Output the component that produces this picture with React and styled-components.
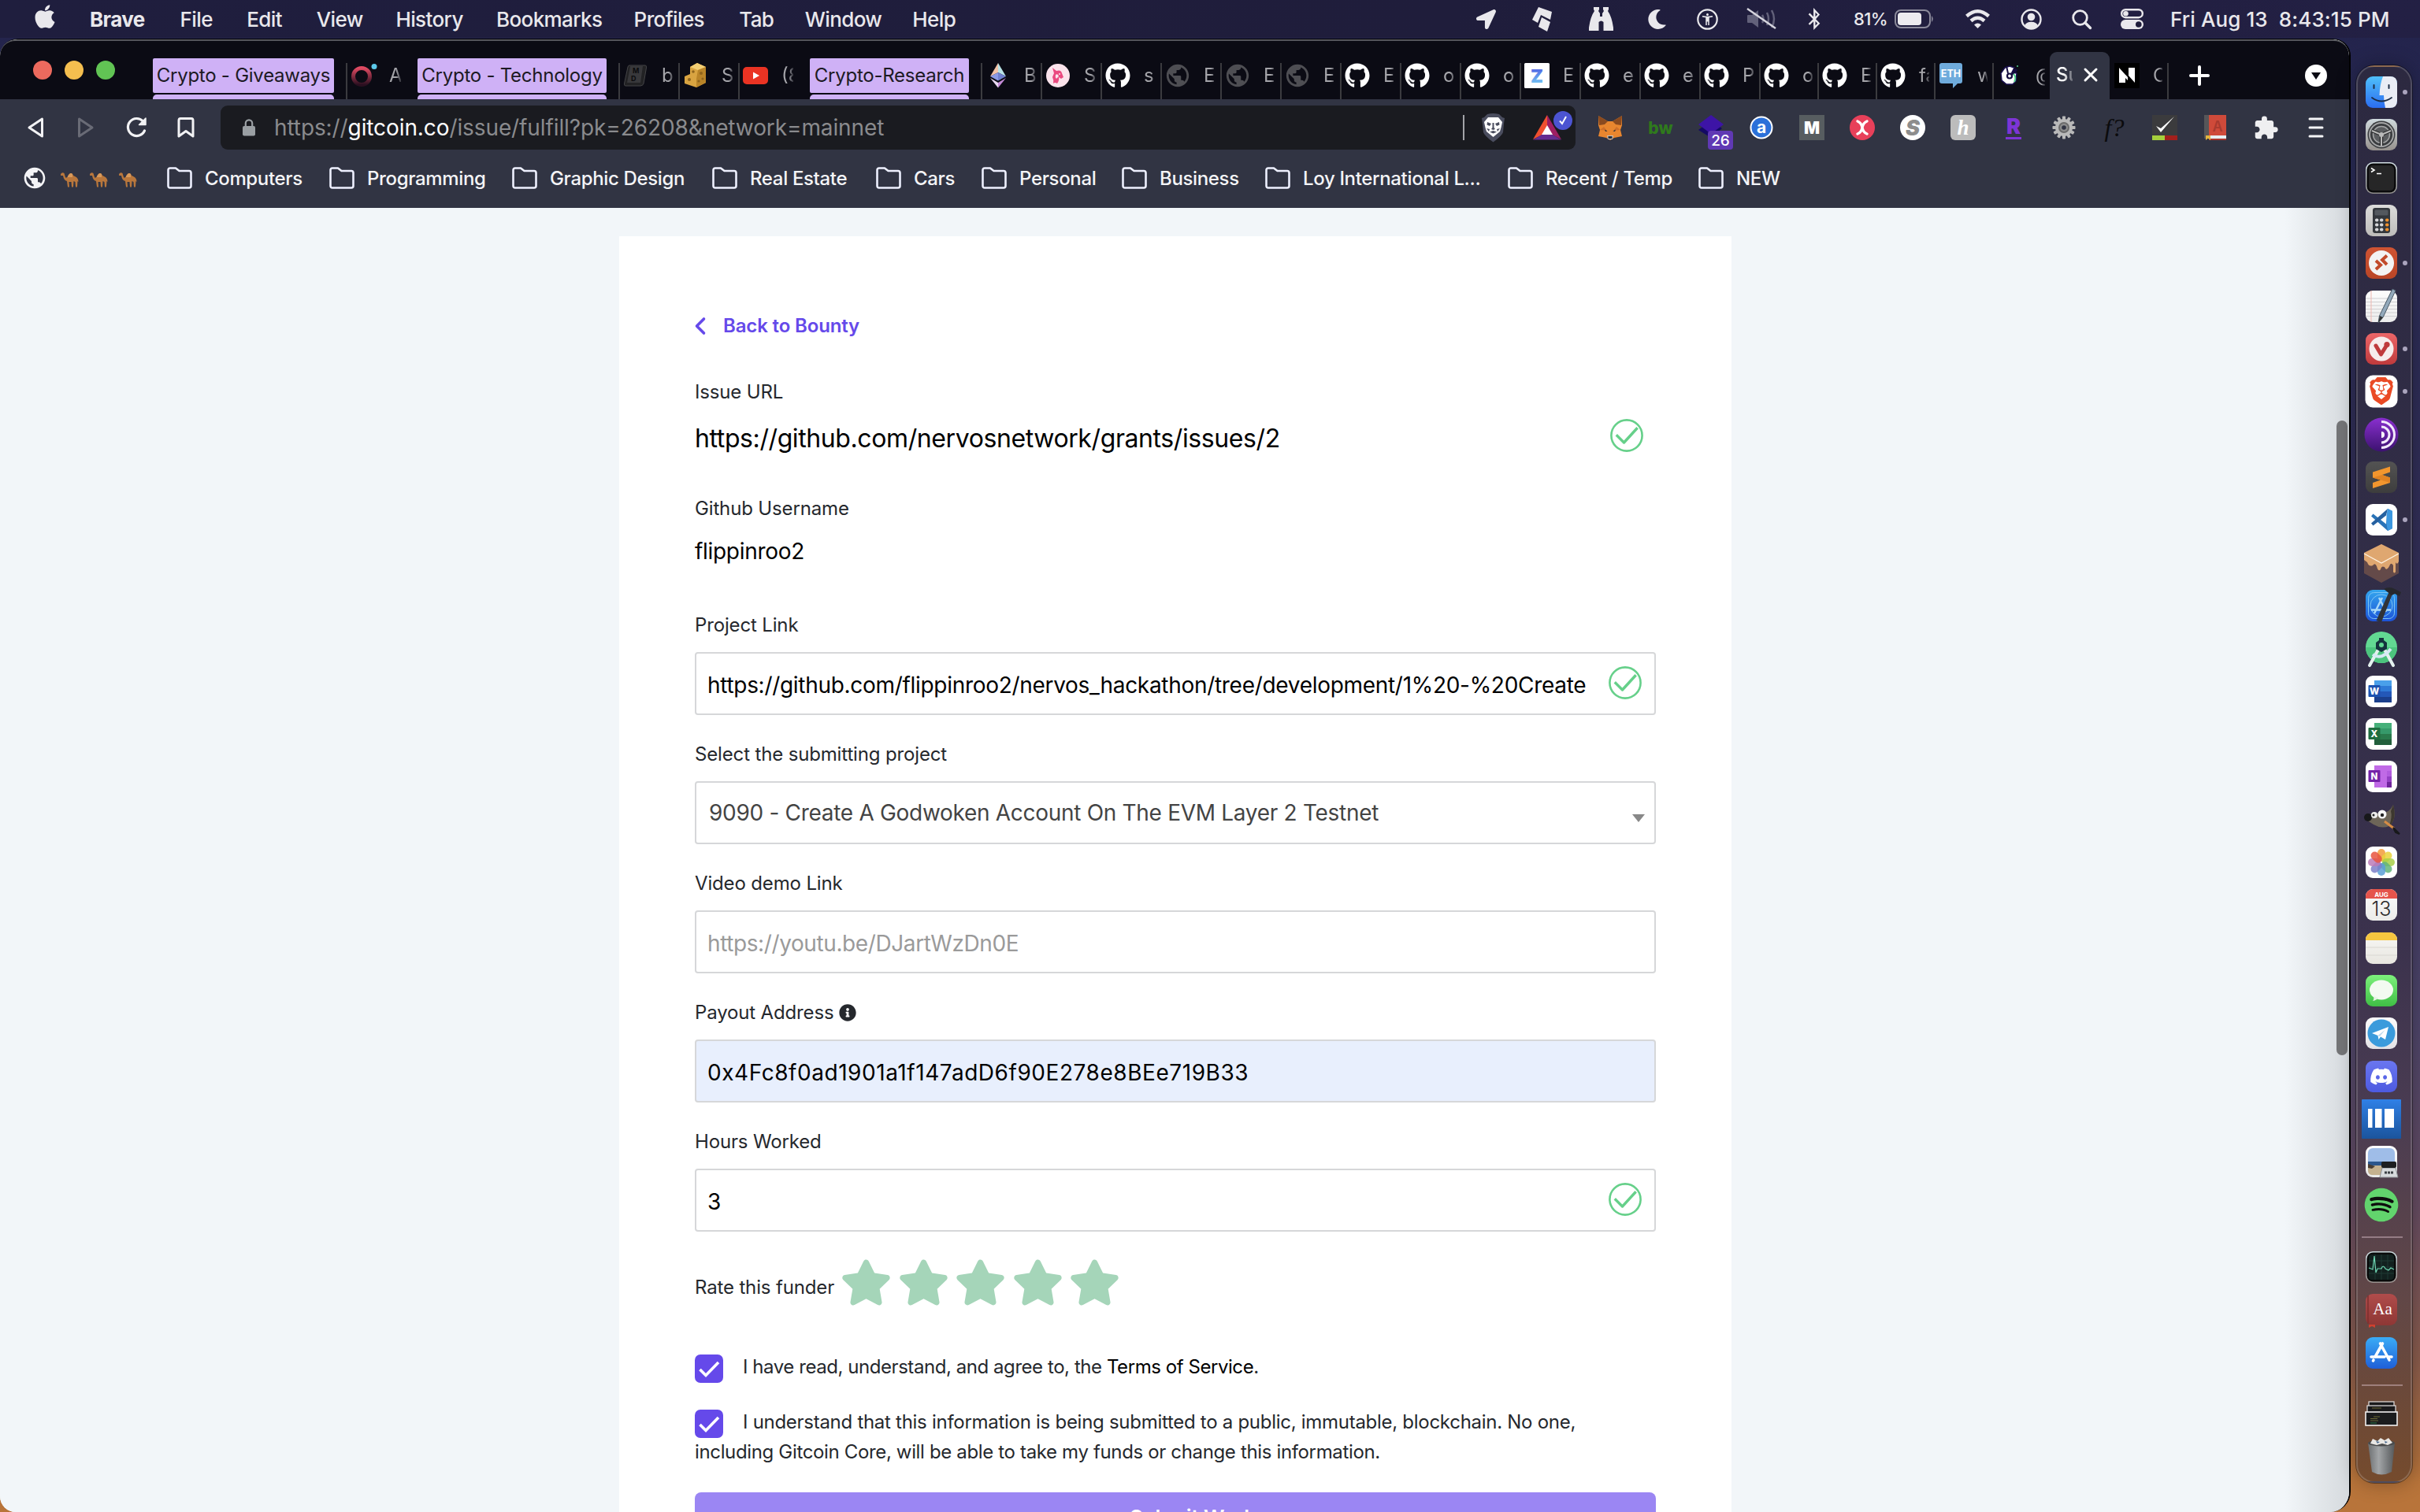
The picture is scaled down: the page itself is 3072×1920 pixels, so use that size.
import React from 'react';
import styled, { createGlobalStyle, css } from 'styled-components';
import {
  FaApple, FaGithub, FaLocationArrow, FaMoon, FaBluetoothB, FaStar,
  FaInfoCircle, FaDiscord, FaSpotify,
} from 'react-icons/fa';
import { MdPublic, MdExtension, MdAccessibilityNew } from 'react-icons/md';
import { SiBrave } from 'react-icons/si';

const GlobalStyle = createGlobalStyle`
  * { box-sizing: border-box; }
  html, body, #root { margin: 0; width: 3072px; height: 1920px; overflow: hidden; }
  body { font-family: Inter, "Liberation Sans", sans-serif; }
  svg { display: block; flex: none; overflow: visible; }
`;

const Desktop = styled.div`
  width: 3072px;
  height: 1920px;
  display: flex;
  flex-direction: column;
  overflow: hidden;
  background: linear-gradient(180deg, #22224a 0%, #292b55 12%, #332f57 38%, #3f3a63 55%, #4e4569 68%, #664c61 80%, #8a5c4c 90%, #b8743a 98%);
`;

/* ---------- system menu bar ---------- */

const MenuBar = styled.header`
  height: 48px;
  flex: none;
  display: flex;
  align-items: center;
  padding: 0 37px 0 43px;
  background: linear-gradient(90deg, #1f1e3e, #1f1d3b 60%, #232044);
  color: #e9e8ec;
  font-size: 26px;
  font-weight: 500;
`;
const MenuList = styled.nav`
  display: flex;
  align-items: center;
  flex: 1;
`;
const MenuItem = styled.span`
  width: ${(p) => p.$w}px;
  margin-right: 42.6px;
  letter-spacing: -0.6px;
  white-space: nowrap;
  font-weight: ${(p) => (p.$bold ? 700 : 500)};
`;
const AppleMark = styled(FaApple)`
  width: 28px;
  height: 34px;
  margin: -6px 43px 0 0;
`;
const StatusItem = styled.span`
  display: flex;
  align-items: center;
  justify-content: center;
  width: ${(p) => p.$w}px;
  margin-right: ${(p) => p.$gap}px;
`;
const BatteryText = styled.span`
  font-size: 22px;
  letter-spacing: -0.6px;
  width: 43px;
  margin-right: 9px;
`;
const Clock = styled.span`
  width: 280px;
  white-space: pre;
  letter-spacing: 0.1px;
`;

/* ---------- workspace ---------- */

const Workspace = styled.div`
  flex: 1;
  display: flex;
  min-height: 0;
`;
const Window = styled.main`
  width: 2984px;
  flex: none;
  margin-top: 1px;
  display: flex;
  flex-direction: column;
  border: 2px solid #000;
  border-width: 1px 2px 0 0;
  border-radius: 22px 22px 26px 20px;
  overflow: hidden;
  background: #f2f6f9;
`;
const TabStrip = styled.div`
  height: 76px;
  flex: none;
  display: flex;
  align-items: flex-end;
  background: #0b0b14;
  border-top: 2px solid #55565c;
  border-radius: 20px 20px 0 0;
`;
const TrafficLights = styled.div`
  display: flex;
  gap: 16px;
  width: 194px;
  padding-left: 42px;
  align-self: center;
`;
const Light = styled.i`
  width: 24px;
  height: 24px;
  border-radius: 50%;
  background: ${(p) => p.$c};
`;
const GroupLabel = styled.div`
  width: ${(p) => p.$w}px;
  height: 52px;
  margin: 0 15px 0 ${(p) => p.$ml || 0}px;
  display: flex;
  flex-direction: column;
  gap: 2px;
`;
const GroupText = styled.span`
  flex: 1;
  display: flex;
  align-items: center;
  justify-content: center;
  padding-bottom: 2px;
  border-radius: 2px;
  background: #cfb1f6;
  color: #1d1a24;
  font-size: 24px;
  letter-spacing: -0.25px;
  white-space: nowrap;
`;
const GroupLine = styled.i`
  height: 6px;
  border-radius: 5px 5px 0 0;
  background: #cfb1f6;
`;
const Tab = styled.div`
  width: ${(p) => p.$w || 76}px;
  height: 46px;
  flex: none;
  display: flex;
  align-items: center;
  padding: 0 6px 14px 4px;
  border-left: 2px solid ${(p) => (p.$bare ? 'transparent' : '#3b3b3f')};
`;
const Favicon = styled.span`
  width: 32px;
  height: 32px;
  flex: none;
  display: flex;
  align-items: center;
  justify-content: center;
  color: ${(p) => p.$c || '#fff'};
`;
const TabTitle = styled.span`
  flex: 1;
  margin-left: ${(p) => (p.$active ? 0 : 17)}px;
  overflow: hidden;
  white-space: nowrap;
  font-size: 24px;
  line-height: 32px;
  height: 32px;
  color: ${(p) => (p.$active ? '#fff' : '#a5a5aa')};
  font-weight: ${(p) => (p.$active ? 500 : 400)};
  mask-image: linear-gradient(90deg, #000 ${(p) => (p.$active ? 45 : 60)}%, rgba(0, 0, 0, 0.25));
`;
const ActiveTab = styled.div`
  width: 76px;
  height: 60px;
  flex: none;
  display: flex;
  align-items: center;
  padding: 0 15px 2px 8px;
  gap: 14px;
  border-radius: 9px 9px 0 0;
  background: #313443;
`;
const TabEnd = styled.i`
  width: 2px;
  height: 46px;
  margin-right: 27px;
  background: #3b3b3f;
`;
const StripButton = styled.span`
  height: 46px;
  margin-right: ${(p) => p.$gap || 0}px;
  padding-top: ${(p) => p.$top}px;
`;

/* ---------- toolbar ---------- */

const Toolbar = styled.div`
  height: 72px;
  flex: none;
  display: flex;
  align-items: center;
  padding-left: 35px;
  background: #313443;
`;
const NavIcon = styled.span`
  width: ${(p) => p.$w}px;
  margin-right: ${(p) => p.$gap}px;
`;
const AddressBar = styled.div`
  width: 1720px;
  height: 56px;
  display: flex;
  align-items: center;
  padding: 0 4px 0 28px;
  border-radius: 9px;
  background: #1a1b20;
`;
const Url = styled.span`
  flex: 1;
  margin-left: 24px;
  font-size: 28px;
  letter-spacing: -0.1px;
  color: #8a8b8e;
  white-space: nowrap;
`;
const Host = styled.b`
  font-weight: 400;
  color: #fff;
`;
const UrlDivider = styled.i`
  width: 2px;
  height: 32px;
  margin-right: 21px;
  background: #a3a4a8;
`;
const RewardsButton = styled.span`
  position: relative;
  width: 36px;
  margin: 0 14px 0 35px;
`;
const RewardsBadge = styled.span`
  position: absolute;
  right: -14px;
  top: -5px;
`;
const ExtensionRow = styled.div`
  display: flex;
  align-items: center;
  gap: 32px;
  margin-left: 28px;
`;
const Extension = styled.span`
  position: relative;
  width: 32px;
  height: 32px;
  display: flex;
  align-items: center;
  justify-content: center;
  border-radius: ${(p) => p.$r || 0};
  background: ${(p) => p.$bg || 'none'};
  color: ${(p) => p.$c || '#fff'};
  font: ${(p) => p.$font || '700 24px Inter, sans-serif'};
  line-height: 1;
`;
const CountBadge = styled.span`
  position: absolute;
  left: 12px;
  top: 20px;
  width: 32px;
  height: 24px;
  border-radius: 4px;
  background: #6039b4;
  color: #fff;
  font: 500 19px/26px Inter, sans-serif;
  text-align: center;
`;
const RLetter = styled.span`
  border-bottom: 3px solid #7d35d6;
  line-height: 26px;
  padding: 0 1px;
`;

/* ---------- bookmarks ---------- */

const BookmarkBar = styled.div`
  height: 66px;
  flex: none;
  display: flex;
  align-items: center;
  padding: 0 0 10px 28px;
  background: #313443;
  color: #f4f4f7;
  font-size: 24px;
  font-weight: 500;
`;
const Camels = styled.span`
  display: flex;
  gap: 12px;
  margin: 3px 37px 0 16px;
`;
const Bookmark = styled.span`
  width: ${(p) => p.$w}px;
  display: flex;
  align-items: center;
  gap: 16px;
  letter-spacing: -0.35px;
  white-space: nowrap;
`;

/* ---------- page ---------- */

const Viewport = styled.div`
  flex: 1;
  min-height: 0;
  display: flex;
  justify-content: space-between;
  padding: 36px 2px 0 786px;
  background: linear-gradient(90deg, transparent 2900px, rgba(60, 66, 74, 0.16) 2984px), #f2f6f9;
`;
const ScrollThumb = styled.i`
  width: 14px;
  height: 806px;
  margin-top: 234px;
  border-radius: 7px;
  background: #747577;
`;
const Card = styled.section`
  width: 1412px;
  padding: 96px 96px 0;
  background: #fff;
  color: #25282d;
  font-size: 24px;
  line-height: 36px;
  letter-spacing: -0.15px;
`;
const BackLink = styled.a`
  display: flex;
  align-items: center;
  gap: 22px;
  margin-bottom: 47px;
  color: #6549ea;
  font-weight: 600;
`;
const StaticRow = styled.div`
  display: flex;
  align-items: center;
  justify-content: space-between;
  height: 44px;
  padding-right: 16px;
  margin: 20px 0 48px;
  color: #000;
  font-size: 32px;
  letter-spacing: -0.4px;
  & > svg { margin-top: -8px; }
`;
const StaticText = styled.div`
  height: 40px;
  margin: 17px 0 55px;
  color: #000;
  font-size: 28px;
  line-height: 40px;
  letter-spacing: -0.3px;
`;
const Label = styled.label`
  display: flex;
  align-items: center;
  gap: 7px;
  height: 36px;
  padding-top: 2px;
`;
const Input = styled.div`
  height: 80px;
  margin: 17px 0 31px;
  padding: ${(p) => (p.$select ? '0 12px 0 16px' : '3px 16px 0 14px')};
  display: flex;
  align-items: center;
  justify-content: space-between;
  border: 2px solid #d6d7d9;
  border-radius: 4px;
  background: ${(p) => (p.$filled ? '#e8effd' : '#fff')};
  color: ${(p) => (p.$placeholder ? '#9a9a9a' : p.$select ? '#444' : '#000')};
  font-size: 28px;
  letter-spacing: ${(p) => p.$ls || '-0.3px'};
  & > svg { margin-top: -5px; }
`;
const InputText = styled.span`
  max-width: 1115px;
  overflow: hidden;
  white-space: nowrap;
`;
const Caret = styled.i`
  margin-top: 13px;
  border: 8px solid transparent;
  border-top: 10px solid #888;
  border-bottom: 0;
`;
const RateRow = styled.div`
  height: 58px;
  margin: 35px 0 60px;
  display: flex;
  align-items: center;
`;
const RateText = styled.span`
  width: 185px;
  padding-top: 13px;
`;
const Stars = styled.span`
  display: flex;
  gap: 7.6px;
  color: #a5d5b9;
`;
const Agreement = styled.p`
  margin: 0 0 32px;
  line-height: 38px;
  white-space: nowrap;
  letter-spacing: ${(p) => p.$ls};
`;
const Checkbox = styled.span`
  display: inline-block;
  overflow: hidden;
  width: 36px;
  height: 36px;
  margin: 0 25px -4px 0;
  vertical-align: -8px;
  border-radius: 7px;
  background: #6549ea;
`;
const Terms = styled.a`
  color: #000;
`;
const LastLine = styled.span`
  letter-spacing: -0.35px;
`;
const Submit = styled.div`
  height: 80px;
  margin-top: 31px;
  padding: 14px 0 0 552px;
  border-radius: 8px;
  background: #9b86f3;
  color: #fff;
  font-size: 26px;
  font-weight: 600;
`;

/* ---------- dock ---------- */

const DockColumn = styled.aside`
  padding: 35px 0 36px 7px;
`;
const Dock = styled.div`
  width: 71px;
  height: 1800px;
  display: flex;
  flex-direction: column;
  align-items: center;
  padding-top: 5px;
  border: 2px solid rgba(255, 255, 255, 0.17);
  outline: 1px solid rgba(0, 0, 0, 0.4);
  border-radius: 23px;
  background: linear-gradient(180deg, #2c2940 0%, #322e48 40%, #3b324d 62%, #4a3c52 74%, #614747 87%, #754b2d 100%);
  box-shadow: 0 0 26px rgba(0, 0, 0, 0.3);
`;
const DockItem = styled.span`
  position: relative;
  height: 54.33px;
  width: 67px;
  display: flex;
  align-items: center;
  padding-left: 5px;
  ${(p) => p.$running && css`
    &::after {
      content: '';
      position: absolute;
      right: 4px;
      top: 24px;
      width: 6px;
      height: 6px;
      border-radius: 50%;
      background: #aaa4bd;
    }
  `}
`;
const DockRule = styled.i`
  width: 52px;
  height: 2px;
  margin: 13px 5px 10px 0;
  background: rgba(230, 205, 215, 0.42);
`;

/* ---------- drawings ---------- */

const Stroke = ({ w, h = w, vb, sw = 3, c = 'currentColor', children }) => (
  <svg width={w} height={h} viewBox={vb || `0 0 ${w} ${h}`} fill="none" stroke={c} strokeWidth={sw} strokeLinecap="round" strokeLinejoin="round">
    {children}
  </svg>
);

const FolderIcon = () => (
  <Stroke w={32} h={28} sw={2.6} c="#eef0ff">
    <path d="M1.500 4Q1.500 1.500 4 1.500H11L15.500 5H28Q30.500 5 30.500 7.500V24Q30.500 26.500 28 26.500H4Q1.500 26.500 1.500 24Z" />
  </Stroke>
);

const Camel = () => (
  <svg width="25" height="20" viewBox="0 0 25 20">
    <path d="M1 3Q3 0 5.500 2L7 7Q8 9 10 6Q13 0 16 3Q17 6 20 6.500Q23.500 8 23.500 13L22.500 12L22 19.500H20L19.500 13L17.500 12L17 19.500H15L14.500 13H11.500L12 19.500H10L9 12Q5 11 4 5L1.200 5Z" fill="#b9773c" />
    <path d="M10 6Q13 0 16 3L16 7H10Z" fill="#d99a5a" />
  </svg>
);

const CheckCircle = () => (
  <Stroke w={42} sw={2.6} c="#66d08a">
    <circle cx="21" cy="21" r="19.600" />
    <path d="M9 21.500L17.500 30L33.500 12.500" strokeLinecap="square" strokeWidth="3.400" />
  </Stroke>
);

const GroupRing = () => (
  <svg width="32" height="32" viewBox="0 0 32 32">
    <defs>
      <linearGradient id="ring" x1="0" y1="0" x2="0" y2="1">
        <stop offset="0" stopColor="#e04a62" />
        <stop offset="1" stopColor="#2a0f20" />
      </linearGradient>
    </defs>
    <circle cx="14" cy="17" r="10.500" fill="none" stroke="url(#ring)" strokeWidth="5" />
    <circle cx="30" cy="4.500" r="3.500" fill="#5cc9ea" />
  </svg>
);

const Cheese = () => (
  <svg width="32" height="32" viewBox="0 0 32 32">
    <path d="M9 5L18 0L29 5V25L17 31L2 26V17L9 14Z" fill="#d9a441" />
    <path d="M9 5L18 0L29 5L19 9Z" fill="#f3cf74" />
    <path d="M19 9L29 5V25L17 31V20Z" fill="#b98428" />
    <g fill="#8f641c">
      <circle cx="13" cy="11" r="1.800" />
      <circle cx="23" cy="13" r="2" />
      <circle cx="25" cy="20" r="1.600" />
      <circle cx="8" cy="21" r="2" />
      <circle cx="20" cy="23" r="1.600" />
    </g>
  </svg>
);

const MdKey = () => (
  <svg width="32" height="32" viewBox="0 0 32 32">
    <path d="M8 3H28Q30 3 29.500 6L26 26Q25 29 22 29H3Q1 29 1.500 26L6 5Q6.500 3 8 3Z" fill="#222224" stroke="#444447" strokeWidth="1" />
    <path d="M9 4H25L22 25H5Z" fill="#38383b" />
    <text x="12" y="13" fill="#0c0c0e" fontFamily="Inter" fontWeight="700" fontSize="9">M</text>
    <text x="10" y="23" fill="#0c0c0e" fontFamily="Inter" fontWeight="700" fontSize="9">D</text>
  </svg>
);

const YouTube = () => (
  <svg width="32" height="32" viewBox="0 0 32 32">
    <rect y="5" width="32" height="22" rx="5" fill="#ea3323" />
    <path d="M13 11.500L21 16L13 20.500Z" fill="#fff" />
  </svg>
);

const EthColor = () => (
  <svg width="32" height="32" viewBox="0 0 32 32">
    <path d="M16 0L6 17L16 12Z" fill="#f3c3a8" />
    <path d="M16 0L26 17L16 12Z" fill="#b9e3e6" />
    <path d="M6 17L16 12V22.500Z" fill="#8a9ae6" />
    <path d="M26 17L16 12V22.500Z" fill="#6f7fd0" />
    <path d="M6 19L16 25V31.500Z" fill="#e9d9f2" />
    <path d="M26 19L16 25V31.500Z" fill="#c48bd8" />
  </svg>
);

const Unicorn = () => (
  <svg width="32" height="32" viewBox="0 0 32 32">
    <circle cx="16" cy="16" r="15" fill="#fbe3ec" />
    <path d="M9 6L14 10Q20 8 21 13L23 18L20 20L17 18Q18 22 15 26Q12 24 10 26Q11 22 9 18Q10 15 11 13Z" fill="#ea4a80" />
    <path d="M13 15Q16 13 17 17L14 20Q12 18 13 15Z" fill="#fbe3ec" />
    <circle cx="18" cy="14" r="1" fill="#fbe3ec" />
  </svg>
);

const ZTile = () => (
  <svg width="32" height="32" viewBox="0 0 32 32">
    <defs>
      <linearGradient id="zt" x1="0" y1="0" x2="0" y2="1">
        <stop offset="0" stopColor="#4a4fe0" />
        <stop offset="1" stopColor="#7ad8f6" />
      </linearGradient>
    </defs>
    <rect width="32" height="32" rx="1.500" fill="#fff" />
    <text x="8" y="24.500" fill="url(#zt)" fontFamily="Inter" fontWeight="900" fontSize="23">Z</text>
  </svg>
);

const EthBubble = () => (
  <svg width="30" height="32" viewBox="0 0 30 32">
    <path d="M3 0H26Q29 0 29 3V23Q29 26 26 26H23L17 32V26H3Q0 26 0 23V3Q0 0 3 0Z" fill="#6fabdc" />
    <text x="14.500" y="18" textAnchor="middle" fill="#fff" fontFamily="Inter" fontWeight="700" fontSize="12.500">ETH</text>
  </svg>
);

const Orbit = () => (
  <svg width="32" height="32" viewBox="0 0 32 32">
    <path d="M16 4L22 6L19 12L25 13L24 23L20 27L12 27L6 22L5 13L10 6Z" fill="#fff" stroke="#1a1050" strokeWidth="1.500" />
    <circle cx="16" cy="16.500" r="3" fill="#fff" stroke="#140c40" strokeWidth="2.200" />
    <path d="M14 13L12 4" stroke="#140c40" strokeWidth="2" />
    <path d="M18 15L25 8" stroke="#140c40" strokeWidth="3.500" />
    <path d="M21 14Q25 18 22 24" stroke="#4fd18a" strokeWidth="2" fill="none" />
    <circle cx="26" cy="4" r="1" fill="#4fd18a" />
  </svg>
);

const NTile = () => (
  <svg width="32" height="32" viewBox="0 0 32 32">
    <rect width="32" height="32" fill="#000" />
    <path d="M6 6L14 15V25H6ZM26 25L18 16V6H26Z" fill="#fff" />
    <path d="M6 6L17 18V22L14 19V15Z" fill="#fff" />
  </svg>
);

const Battery = () => (
  <svg width="51" height="24" viewBox="0 0 51 24">
    <rect x="1" y="1" width="44" height="22" rx="7" fill="none" stroke="#8b8a9b" strokeWidth="2" />
    <rect x="4" y="4" width="30" height="16" rx="4" fill="#ecebef" />
    <path d="M47 8Q50.500 12 47 16Z" fill="#8b8a9b" />
  </svg>
);

const Wifi = () => (
  <Stroke w={33} h={24} sw={4.4}>
    <path d="M2.500 8.500Q16.500 -4 30.500 8.500" strokeLinecap="butt" />
    <path d="M8 14.500Q16.500 7 25 14.500" strokeLinecap="butt" />
    <path d="M12 19.500Q16.500 15.500 21 19.500L16.500 24Z" fill="currentColor" stroke="none" />
  </Stroke>
);

const UserCircle = () => (
  <svg width="27" height="27" viewBox="0 0 27 27">
    <circle cx="13.500" cy="13.500" r="12" fill="none" stroke="currentColor" strokeWidth="2.400" />
    <circle cx="13.500" cy="10.500" r="4.800" fill="currentColor" />
    <path d="M5 21.500Q7 16.800 13.500 16.800T22 21.500Q19 25.500 13.500 25.500T5 21.500Z" fill="currentColor" />
  </svg>
);

const ControlCenter = () => (
  <svg width="29" height="26" viewBox="0 0 29 26">
    <rect x="1.200" y="1.200" width="26.600" height="10" rx="5" fill="none" stroke="currentColor" strokeWidth="2.400" />
    <circle cx="6.500" cy="6.200" r="3.300" fill="currentColor" />
    <rect y="14" width="29" height="12" rx="6" fill="currentColor" />
    <circle cx="22.800" cy="20" r="3.800" fill="#1f1d3b" />
  </svg>
);

const Muted = () => (
  <svg width="38" height="28" viewBox="0 0 38 28">
    <path d="M1 10Q1 9 2 9H7L15 3V25L7 19H2Q1 19 1 18Z" fill="#62617a" />
    <path d="M20 9Q23 14 20 19M26 6Q30 14 26 22M32 3Q38 14 32 25" fill="none" stroke="#62617a" strokeWidth="2.500" />
    <path d="M1 1L37 26" stroke="#d6d5de" strokeWidth="2.500" />
  </svg>
);

const Binoculars = () => (
  <svg width="31" height="30" viewBox="0 0 31 30">
    <path d="M6 0H13V3L12 5L14 8V12H17V8L19 5L18 3V0H25V3L24 5Q29 12 31 26V30H18.500V19Q15.500 16 12.500 19V30H0V26Q2 12 7 5L6 3Z" fill="currentColor" />
  </svg>
);

const Kite = () => (
  <svg width="26" height="31" viewBox="0 0 26 31">
    <path d="M8 0L25 6L23 16L11 10L7 20L0 16Z" fill="currentColor" />
    <path d="M12 13L23 19L19 31L8 25Z" fill="currentColor" />
  </svg>
);

const Accessibility = () => (
  <svg width="27" height="27" viewBox="0 0 27 27">
    <circle cx="13.500" cy="13.500" r="12.200" fill="none" stroke="currentColor" strokeWidth="2.200" />
    <g transform="translate(4.500 4.500)"><MdAccessibilityNew size={18} /></g>
  </svg>
);

const Lion = () => (
  <svg width="31" height="37" viewBox="0 0 31 37">
    <path d="M8 1Q15 -1 23 1L27 5L30 6L29 13L28 24Q27 28 15.500 36.500Q4 28 3 24L2 13L1 6L4 5Z" fill="#4a4d5e" />
    <path d="M9 5H22L27 11L25.500 18L24 23L15.500 30L7 23L5.500 18L4 11Z" fill="#fff" />
    <path d="M8 11L13 13L11 16L7.500 14.500ZM23 11L18 13L20 16L23.500 14.500ZM13 20L15.500 21L18 20L16.500 18V12H14.500V18ZM7 19L11 20L10 23ZM24 19L20 20L21 23ZM11 23.500L15.500 22L20 23.500L15.500 25.500Z" fill="#4a4d5e" />
  </svg>
);

const Bat = () => (
  <svg width="36" height="32" viewBox="0 0 36 32">
    <path d="M18 0L0 31L12 25L18 14Z" fill="#f0502f" />
    <path d="M18 0L36 31L24 25L18 14Z" fill="#9e1f63" />
    <path d="M0 31.500H36L24 24.500H12Z" fill="#662d91" />
    <path d="M18 13L25 25H11Z" fill="#fff" />
  </svg>
);

const Fox = () => (
  <svg width="32" height="31" viewBox="0 0 32 31">
    <path d="M1 0L13 7H19L31 0L31 12L29 18L31 26L21 28L16 31L11 28L1 26L3 18L1 12Z" fill="#e8862f" />
    <path d="M1 0L13 7L9 11L2 12ZM31 0L19 7L23 11L30 12Z" fill="#8a4a1f" />
    <path d="M8 14L12 19L3 18ZM24 14L20 19L29 18Z" fill="#d0702a" />
    <path d="M12 25H20L19 30H13Z" fill="#c9c0bb" />
    <path d="M13.500 26H18.500V29H13.500Z" fill="#26303c" />
    <path d="M9 17.500L12.500 19.500L10 20ZM23 17.500L19.500 19.500L22 20Z" fill="#26303c" />
  </svg>
);

const Diamond = () => (
  <svg width="32" height="32" viewBox="0 0 32 32">
    <path d="M0 19L16 7L30 17L16 29Z" fill="#140a63" />
    <path d="M0 12L16 0L32 12L16 24Z" fill="#3d14a6" />
  </svg>
);

const Gear = () => (
  <svg width="30" height="30" viewBox="-15 -15 30 30">
    <g fill="#b9b9b9">
      {Array.from({ length: 12 }, (_, i) => (
        <rect key={i} x="-2" y="-14.500" width="4" height="6" rx="0.800" transform={`rotate(${i * 30})`} />
      ))}
      <circle r="11" />
    </g>
    <circle r="6" fill="#8d8d8d" stroke="#6b6b6b" strokeWidth="2" />
    <circle r="2.800" fill="#313443" />
  </svg>
);

const Ticker = () => (
  <svg width="32" height="32" viewBox="0 0 32 32">
    <rect width="32" height="32" fill="#3b3b3d" />
    <rect y="26" width="16" height="6" fill="#a5cf3c" />
    <rect x="16" y="26" width="16" height="6" fill="#a3201c" />
    <path d="M5 14L11 22L28 2L11 17Z" fill="#fff" />
  </svg>
);

const RedBook = () => (
  <svg width="28" height="32" viewBox="0 0 28 32">
    <path d="M0 0H6V30H0Z" fill="#565659" />
    <path d="M6 0H28V26H6Z" fill="#cf4a3a" />
    <path d="M5 26H28V30H5Z" fill="#e7eef2" />
    <path d="M6 30H28V32H6Z" fill="#a8352b" />
    <path d="M2 26H8V32L5 29.500L2 32Z" fill="#e4b53f" />
    <text x="17" y="21" textAnchor="middle" fill="#a93a2f" fontFamily="Inter" fontWeight="600" fontSize="18">A</text>
  </svg>
);

/* A 40px rounded app tile centred in a 48px canvas. */
const Tile = ({ id, from, to, stroke, children }) => (
  <svg width="50" height="48" viewBox="-1 0 50 48">
    <defs>
      <linearGradient id={id} x1="0" y1="0" x2="0" y2="1">
        <stop offset="0" stopColor={from} />
        <stop offset="1" stopColor={to || from} />
      </linearGradient>
      <clipPath id={`${id}-c`}><rect x="4" y="4" width="40" height="40" rx="9" /></clipPath>
    </defs>
    <rect x="4" y="4" width="40" height="40" rx="9" fill={`url(#${id})`} stroke={stroke} />
    {children}
  </svg>
);
const Free = ({ children }) => (
  <svg width="50" height="48" viewBox="-1 0 50 48">{children}</svg>
);

const Finder = () => (
  <Tile id="finder" from="#4fc0fb" to="#2b6df0">
    <path d="M26 4H35Q44 4 44 13V35Q44 44 35 44H29Q27 36 27 28H21.500Q22 14 26 4Z" fill="#e9edf5" />
    <path d="M14.500 15V19M33.500 15V19" stroke="#1c2c44" strokeWidth="2" strokeLinecap="round" />
    <path d="M12 31Q24 40 37 31" stroke="#1c2c44" strokeWidth="1.800" fill="none" strokeLinecap="round" />
  </Tile>
);
const Preferences = () => (
  <Tile id="prefs" from="#cfd9dd" to="#96918d">
    <circle cx="24" cy="24" r="17.500" fill="#3a3c3f" />
    <circle cx="24" cy="24" r="15" fill="none" stroke="#a4a5a6" strokeWidth="2" />
    <circle cx="24" cy="24" r="10.500" fill="#5b5d60" stroke="#a4a5a6" strokeWidth="1.500" />
    <path d="M24 24L12 19M24 24L36 19M24 24L24 38" stroke="#2c2d2f" strokeWidth="4.500" />
    <path d="M24 24L12 19M24 24L36 19M24 24L24 38" stroke="#b9b9b9" strokeWidth="2" />
    <circle cx="24" cy="24" r="3" fill="#b9b9b9" />
  </Tile>
);
const Terminal = () => (
  <Tile id="term" from="#d3e0e6" to="#8e8c8a">
    <rect x="5.500" y="5.500" width="37" height="37" rx="8" fill="#0a0a0b" />
    <rect x="8" y="8" width="32" height="32" rx="5" fill="#262627" />
    <path d="M11 11.500L15 14L11 16.500M18 18.500H24" stroke="#fff" strokeWidth="1.600" fill="none" />
  </Tile>
);
const Calculator = () => (
  <Tile id="calc" from="#dcdcda" to="#bdbcba">
    <rect x="13" y="8" width="22" height="32" rx="3" fill="#33373c" />
    <rect x="15.500" y="10.500" width="17" height="7" rx="1.500" fill="#53585e" />
    {[21.5, 27.5, 33.5].map((y) => [16, 22, 29].map((x, i) => (
      <rect key={`${x}-${y}`} x={x} y={y} width="4.400" height="4" rx="1.800" fill={i === 2 ? '#f0912d' : '#d5d6d8'} />
    )))}
  </Tile>
);
const Remote = () => (
  <Tile id="remote" from="#cf5433" to="#b94526">
    <circle cx="24" cy="24" r="16" fill="#f3f3f3" />
    <path d="M17 21L23 26.500L17 32M31 14.500L25 20L31 26" stroke="#c24a2a" strokeWidth="4" fill="none" />
  </Tile>
);
const TextEdit = () => (
  <Tile id="tedit" from="#fdfdfd" to="#ececec">
    <path d="M4 14H44M4 18.500H44M4 23H44M4 27.500H44M4 32H44M4 36.500H44" stroke="#cfcfd2" strokeWidth="1" />
    <path d="M11 4V44" stroke="#efb7b0" strokeWidth="1" />
    <path d="M38 2L42 4L26 38L20 45L21.500 36Z" fill="#93a9bb" stroke="#4c5b68" strokeWidth="1" />
    <path d="M22 36L26 38L20 45Z" fill="#333" />
  </Tile>
);
const Vivaldi = () => (
  <Tile id="viv" from="#ec6668" to="#bf3a3c">
    <circle cx="24" cy="24" r="15.500" fill="#f6ecec" />
    <path d="M17 20L23.500 31L31 19" stroke="#bf3a3c" strokeWidth="5" fill="none" strokeLinecap="round" strokeLinejoin="round" />
    <circle cx="31" cy="18.500" r="3.600" fill="#bf3a3c" />
  </Tile>
);
const BraveDock = () => (
  <Tile id="brave" from="#ffffff" stroke="#fff">
    <g transform="translate(6.500 6)" color="#ea4a25"><SiBrave size={35} /></g>
  </Tile>
);
const Tor = () => (
  <Free>
    <defs>
      <linearGradient id="tor" x1="0" y1="0" x2="0" y2="1">
        <stop offset="0" stopColor="#8a2fd0" />
        <stop offset="1" stopColor="#3c1270" />
      </linearGradient>
    </defs>
    <circle cx="24" cy="24" r="21.500" fill="url(#tor)" />
    <path d="M24 20A4 4 0 0 1 24 28Z" fill="#fff" />
    <path d="M24 14A10 10 0 0 1 24 34M24 7.500A16.500 16.500 0 0 1 24 40.500" stroke="#f2e9fb" strokeWidth="3" fill="none" />
  </Free>
);
const Sublime = () => (
  <Tile id="subl" from="#535353" to="#3d3d3d">
    <path d="M13 17.500L35 10.500V17.500L25 21L35 24.500V31L13 38V31L23 27.500L13 24.500Z" fill="#f2962e" />
    <path d="M13 24.500L25 21L35 24.500V31Z" fill="#e08323" />
  </Tile>
);
const Code = () => (
  <Tile id="code" from="#ffffff">
    <path d="M32 10L38 13V35L32 38L11 19.500L13.500 16.500L30 29.500Z" fill="#2a73b8" />
    <path d="M32 10L30 18.500L13.500 31.500L11 28.500Z" fill="#2560a0" />
    <path d="M32 10L38 13V35L32 38L30.500 30V18Z" fill="#3c97e0" />
  </Tile>
);
const Pancake = () => (
  <Free>
    <path d="M24 0L46 11V37L24 49L2 37V11Z" fill="#644a49" />
    <path d="M24 0L46 11V22Q44 27 42 23V35Q40.500 38 39 35V27Q36 22 34 28Q30 35 28 29Q24 27 23 32Q20 36 18 28Q16 23 13 27Q8 29 6 23L2 20V11Z" fill="#dfa770" />
    <path d="M2 12L24 24L46 12" stroke="#fff3e2" strokeWidth="1.400" fill="none" />
  </Free>
);
const Xcode = () => (
  <Tile id="xcode" from="#33a6ee" to="#1c52d8">
    <rect x="7.500" y="7.500" width="33" height="33" rx="7" stroke="#7cc4f4" strokeWidth="1" fill="none" />
    <circle cx="24" cy="24" r="14" stroke="#7cc4f4" strokeWidth="1" fill="none" />
    <path d="M15 34L25 14M30 32L21 14M11 29.500H36" stroke="#a9d9f8" strokeWidth="2.400" fill="none" />
    <path d="M34 6L38.500 8L24 45L17.500 43Z" fill="#303338" />
    <path d="M27 3Q34 -1 41 3L49 7L47 12L41 9L37 11Z" fill="#26282c" />
  </Tile>
);
const Studio = () => (
  <Free>
    <circle cx="24" cy="23" r="20" fill="#62d892" />
    <path d="M4 23A20 20 0 0 0 44 23Z" fill="#4cc47e" />
    <path d="M21 24L9 46M27 24L39 46" stroke="#e4f1ef" strokeWidth="4" strokeLinecap="round" />
    <path d="M13 32Q24 40 36 25" stroke="#d6e9f5" strokeWidth="4" fill="none" />
    <path d="M21 11H27V14L31 17V25L24 29L17 25V17L21 14Z" fill="#14333d" />
    <circle cx="24" cy="20" r="3" fill="#62d892" />
  </Free>
);
const Office = ({ id, letter, dark, tones, purple }) => (
  <Tile id={id} from="#ffffff">
    {tones.map((t, i) => <rect key={t} x="15" y={10 + i * 7} width="22" height="7" fill={t} />)}
    {purple && <rect x="15" y="10" width="16" height="28" fill="#c06ae6" />}
    <rect x="7.500" y="16" width="15" height="15" rx="1" fill={dark} />
    <text x="15" y="28" textAnchor="middle" fill="#fff" fontFamily="Inter" fontWeight="800" fontSize="11.500">{letter}</text>
  </Tile>
);
const Gimp = () => (
  <Free>
    <path d="M4 20Q12 14 22 16Q34 16 39 5Q44 24 34 32Q24 36 14 30Q8 26 4 24Z" fill="#6d6558" />
    <path d="M39 5Q44 24 34 32Q38 20 36 13Z" fill="#3d382f" />
    <ellipse cx="7" cy="21" rx="5" ry="5" fill="#17181a" />
    <circle cx="15" cy="18" r="4" fill="#eee" />
    <circle cx="25" cy="17" r="5.500" fill="#f6f6f6" />
    <circle cx="14" cy="18" r="1.500" fill="#222" />
    <circle cx="25" cy="18" r="2.200" fill="#222" />
    <path d="M28 26L40 35" stroke="#d68c45" strokeWidth="3" />
    <path d="M39 34L47 42L42 40Z" fill="#17181a" stroke="#17181a" strokeWidth="2" />
  </Free>
);
const Photos = () => (
  <Tile id="photos" from="#ffffff">
    {['#f29b38', '#e9d23c', '#a8cf48', '#63b57a', '#5b9fd6', '#7d7fc9', '#bb7bb8', '#e8543f'].map((c, i) => (
      <rect key={c} x="19" y="7" width="10" height="16" rx="5" fill={c} opacity="0.850" transform={`rotate(${i * 45} 24 24)`} />
    ))}
  </Tile>
);
const Calendar = () => (
  <Tile id="cal" from="#fafafa" to="#ececea">
    <rect x="4" y="4" width="40" height="12" fill="#e5544b" clipPath="url(#cal-c)" />
    <text x="24" y="13.500" textAnchor="middle" fill="#fff" fontFamily="Inter" fontWeight="700" fontSize="8">AUG</text>
    <text x="24" y="37.500" textAnchor="middle" fill="#2a2a2a" fontFamily="Inter" fontWeight="300" fontSize="25">13</text>
  </Tile>
);
const Notes = () => (
  <Tile id="notes" from="#f8f8f6" to="#e8e6e0">
    <rect x="4" y="4" width="40" height="10" fill="#f6c63f" clipPath="url(#notes-c)" />
    <path d="M4 23H44M4 33H44" stroke="#d9d7d2" strokeWidth="1" />
  </Tile>
);
const Messages = () => (
  <Tile id="msg" from="#7df07c" to="#3fbf45">
    <ellipse cx="24" cy="23" rx="15" ry="12.500" fill="#f3faf1" />
    <path d="M14 31Q15 35 13 37Q18 36 20 33Z" fill="#e6f3e4" />
  </Tile>
);
const Telegram = () => (
  <Tile id="tg" from="#fbfbfb" to="#e4e2e6">
    <circle cx="24" cy="24" r="17.500" fill="#3b9bdc" />
    <path d="M12 24L33 16L29 32L23 28.500L20.500 32L19.500 27Z" fill="#fff" />
    <path d="M19.500 27L29 19.500L22 28Z" fill="#bcd9ee" />
  </Tile>
);
const Discord = () => (
  <Tile id="disc" from="#6a76f0" to="#4d5ae0">
    <g transform="translate(9 9)" color="#fff"><FaDiscord size={30} /></g>
  </Tile>
);
const Columns = () => (
  <Free>
    <defs>
      <linearGradient id="cols" x1="0" y1="0" x2="0" y2="1">
        <stop offset="0" stopColor="#2f80e6" />
        <stop offset="1" stopColor="#1b549c" />
      </linearGradient>
    </defs>
    <rect x="-1" y="-1" width="50" height="50" rx="1" fill="url(#cols)" />
    <path d="M7 11H12.500V35H7ZM16 11H24.500V35H16ZM28 11H40V35H28Z" fill="#fff" />
  </Free>
);
const Preview = () => (
  <Tile id="prev" from="#ffffff" to="#e8e8e8">
    <rect x="7" y="7" width="34" height="34" rx="6" fill="#9fbde8" />
    <path d="M7 24H41V29H7Z" fill="#2c568c" />
    <path d="M7 29H41V35Q41 41 35 41H13Q7 41 7 35Z" fill="#c5b18f" />
    <path d="M7 27L16 30L12 33L7 32Z" fill="#4a3d33" />
    <path d="M25 32H42L45 44H22Z" fill="#d7dadd" stroke="#8b8f94" strokeWidth="1" />
    <rect x="24" y="24" width="19" height="8" rx="2" fill="#1d1e20" />
    <path d="M28 38H39" stroke="#3b3f45" strokeWidth="3" strokeDasharray="3 1" />
  </Tile>
);
const Spotify = () => (
  <Free>
    <circle cx="24" cy="24" r="21" fill="#0d0d0d" />
    <g transform="translate(2 2)" color="#62d46d"><FaSpotify size={44} /></g>
  </Free>
);
const Activity = () => (
  <Tile id="act" from="#c9dadd" to="#9a918e">
    <rect x="5.500" y="5.500" width="37" height="37" rx="8" fill="#080909" />
    <rect x="8" y="8" width="32" height="32" rx="4" fill="#12211f" />
    <path d="M8 16H40M8 24H40M8 32H40M16 8V40M24 8V40M32 8V40" stroke="#1f3a35" strokeWidth="1" />
    <path d="M8 25L13 27L15 10L17 31L19 26H24Q26 20 29 26L33 28L36 25L40 27" stroke="#6fd8b4" strokeWidth="1.200" fill="none" />
  </Tile>
);
const Dictionary = () => (
  <Tile id="dict" from="#b04c4b" to="#8e3735">
    <path d="M7 6V42" stroke="#7c2f2e" strokeWidth="1.500" />
    <path d="M8 43H16V47L12 45L8 47Z" fill="#d1402f" />
    <text x="25.500" y="30" textAnchor="middle" fill="#fff" fontFamily="'Liberation Serif'" fontWeight="400" fontSize="21">Aa</text>
  </Tile>
);
const AppStore = () => (
  <Tile id="apps" from="#3aacf6" to="#1f5fd8">
    <path d="M25.500 12L16 29M22.500 12L34 33M11 29H28M33 29H37M14 33L13.500 34" stroke="#fff" strokeWidth="3.600" strokeLinecap="round" />
  </Tile>
);
const WindowStack = () => (
  <Free>
    <rect x="8" y="7" width="32" height="14" fill="#1a1a1c" stroke="#e3e0e0" strokeWidth="1.200" />
    <rect x="6" y="12" width="36" height="14" fill="#1a1a1c" stroke="#e3e0e0" strokeWidth="1.200" />
    <rect x="4" y="20" width="40" height="17" fill="#1b1c1e" stroke="#f1efef" strokeWidth="1.600" />
    <path d="M12 15H24M14 26H22M10 28.500H19M10 31H20" stroke="#6c6a35" strokeWidth="1" />
    <path d="M10 34H18" stroke="#2f7d4a" strokeWidth="1" />
  </Free>
);
const Trash = () => (
  <Free>
    <defs>
      <linearGradient id="bin" x1="0" y1="0" x2="1" y2="0">
        <stop offset="0" stopColor="#6c6f71" />
        <stop offset="0.400" stopColor="#a2a5a7" />
        <stop offset="1" stopColor="#55585a" />
      </linearGradient>
    </defs>
    <path d="M7 5L41 5L37 42Q24 49 12 42Z" fill="url(#bin)" />
    <ellipse cx="24" cy="5.500" rx="17" ry="4" fill="#4b4c4d" />
    <path d="M10 6L13 0L19 3L23 -1L28 2L33 -1L38 5L32 8L25 6L18 8Z" fill="#e9e7e4" />
    <path d="M17 3L22 4L19 6ZM28 3L32 4L29 6Z" fill="#4d6c8f" />
  </Free>
);

/* ---------- data ---------- */

const menus = [['File', 42], ['Edit', 46], ['View', 58], ['History', 85], ['Bookmarks', 132], ['Profiles', 91], ['Tab', 41], ['Window', 94], ['Help', 60]];

const Hub = () => <FaGithub size={32} />;
const Globe = () => <MdPublic size={34} />;

const tabsA = [[MdKey, 'b'], [Cheese, 'S'], [YouTube, '(8']];
const tabsB = [
  [EthColor, 'B'], [Unicorn, 'S'], [Hub, 's'], [Globe, 'E', '#4e4e53'], [Globe, 'E', '#4e4e53'], [Globe, 'E', '#4e4e53'],
  [Hub, 'E'], [Hub, 'o'], [Hub, 'o'], [ZTile, 'E'], [Hub, 'e'], [Hub, 'e'], [Hub, 'P'],
  [Hub, 'o', null, 74], [Hub, 'E', null, 74], [Hub, 'fa', null, 74], [EthBubble, 'w', null, 74], [Orbit, '@', null, 73],
];
const bookmarks = [
  ['Computers', 206], ['Programming', 232], ['Graphic Design', 254], ['Real Estate', 208], ['Cars', 134], ['Personal', 178],
  ['Business', 182], ['Loy International L...', 308], ['Recent / Temp', 242], ['NEW', 110],
];
const dockApps = [
  [Finder, true], [Preferences], [Terminal], [Calculator], [Remote, true], [TextEdit], [Vivaldi, true], [BraveDock, true],
  [Tor], [Sublime], [Code, true], [Pancake], [Xcode], [Studio],
  [() => <Office id="word" letter="W" dark="#1d52b0" tones={['#4aa0ea', '#2f7ad6', '#2458b8', '#1b3f8c']} />],
  [() => <Office id="excel" letter="X" dark="#1f6e40" tones={['#46b07a', '#36996a', '#2a7a4c', '#225f3c']} />],
  [() => <Office id="onenote" letter="N" dark="#7422a8" purple tones={['#c06ae7', '#b25cde', '#9440c4', '#6f249c']} />],
  [Gimp], [Photos], [Calendar], [Notes], [Messages], [Telegram], [Discord], [Columns], [Preview], [Spotify],
];
const dockUtilities = [Activity, Dictionary, AppStore];

const renderTab = ([Icon, title, color, w], i) => (
  <Tab key={i} $w={w}>
    <Favicon $c={color}><Icon /></Favicon>
    <TabTitle>{title}</TabTitle>
  </Tab>
);

const Group = ({ w, ml, children }) => (
  <GroupLabel $w={w} $ml={ml}>
    <GroupText>{children}</GroupText>
    <GroupLine />
  </GroupLabel>
);

const Tick = () => (
  <Checkbox>
    <Stroke w={36} sw={3.6} c="#fff">
      <path d="M6.500 19L14 26.500L30 10" strokeLinecap="butt" strokeLinejoin="miter" />
    </Stroke>
  </Checkbox>
);

function SystemMenu() {
  return (
    <MenuBar>
      <MenuList>
        <AppleMark />
        <MenuItem $w={72} $bold>Brave</MenuItem>
        {menus.map(([m, w]) => <MenuItem key={m} $w={w}>{m}</MenuItem>)}
      </MenuList>
      <StatusItem $w={26} $gap={46}><FaLocationArrow size={25} /></StatusItem>
      <StatusItem $w={26} $gap={46}><Kite /></StatusItem>
      <StatusItem $w={31} $gap={42}><Binoculars /></StatusItem>
      <StatusItem $w={27} $gap={37}><FaMoon size={25} /></StatusItem>
      <StatusItem $w={27} $gap={36}><Accessibility /></StatusItem>
      <StatusItem $w={38} $gap={38}><Muted /></StatusItem>
      <StatusItem $w={20} $gap={40}><FaBluetoothB size={28} /></StatusItem>
      <BatteryText>81%</BatteryText>
      <StatusItem $w={51} $gap={38}><Battery /></StatusItem>
      <StatusItem $w={33} $gap={38}><Wifi /></StatusItem>
      <StatusItem $w={27} $gap={38}><UserCircle /></StatusItem>
      <StatusItem $w={25} $gap={37}>
        <Stroke w={25} sw={2.8}><circle cx="10.500" cy="10.500" r="8.800" /><path d="M17 17L23.500 23.500" strokeWidth="3.400" /></Stroke>
      </StatusItem>
      <StatusItem $w={29} $gap={34}><ControlCenter /></StatusItem>
      <Clock>{'Fri Aug 13  8:43:15 PM'}</Clock>
    </MenuBar>
  );
}

function Tabs() {
  return (
    <TabStrip>
      <TrafficLights>
        <Light $c="#ec6a5e" /><Light $c="#f4be4f" /><Light $c="#61c454" />
      </TrafficLights>
      <Group w={230}>Crypto - Giveaways</Group>
      {renderTab([GroupRing, 'A'], 'a')}
      <Group w={240} ml={15}>Crypto - Technology</Group>
      {tabsA.map(renderTab)}
      <Group w={202} ml={15}>Crypto-Research</Group>
      {tabsB.map(renderTab)}
      <ActiveTab>
        <TabTitle $active>Su</TabTitle>
        <Stroke w={18} sw={3} c="#fff"><path d="M2 2L16 16M16 2L2 16" /></Stroke>
      </ActiveTab>
      <Tab $w={73} $bare>
        <Favicon><NTile /></Favicon>
        <TabTitle>C</TabTitle>
      </Tab>
      <TabEnd />
      <StripButton $gap={122} $top={4}>
        <Stroke w={24} sw={4} c="#fff"><path d="M12 1V23M1 12H23" /></Stroke>
      </StripButton>
      <StripButton $top={2}>
        <svg width="28" height="28" viewBox="0 0 28 28">
          <circle cx="14" cy="14" r="14" fill="#fff" />
          <path d="M8 10H20L14 19Z" fill="#0b0b14" />
        </svg>
      </StripButton>
    </TabStrip>
  );
}

function BrowserToolbar() {
  return (
    <Toolbar>
      <NavIcon $w={20} $gap={44}>
        <Stroke w={20} h={26} c="#f2f2f4"><path d="M18.500 2V24L2 13Z" /></Stroke>
      </NavIcon>
      <NavIcon $w={20} $gap={40}>
        <Stroke w={20} h={26} c="#696b76"><path d="M1.500 2V24L18 13Z" /></Stroke>
      </NavIcon>
      <NavIcon $w={28} $gap={38}>
        <Stroke w={28} h={26} c="#f2f2f4">
          <path d="M22.500 5A11 11 0 1 0 24.500 17" strokeWidth="3.200" />
          <path d="M26 1V9.500H17.500Z" fill="#f2f2f4" strokeWidth="1.500" />
        </Stroke>
      </NavIcon>
      <NavIcon $w={22} $gap={33}>
        <Stroke w={22} h={26} c="#f2f2f4"><path d="M2 4Q2 1.500 4 1.500H18Q20 1.500 20 4V24L11 17.500L2 24Z" /></Stroke>
      </NavIcon>
      <AddressBar>
        <svg width="16" height="22" viewBox="0 0 16 22">
          <rect y="9" width="16" height="12.500" rx="2" fill="#9a9fa3" />
          <path d="M3.800 10V5.500A4.200 4.200 0 0 1 12.200 5.500V10" stroke="#9a9fa3" strokeWidth="2.200" fill="none" />
        </svg>
        <Url>https://<Host>gitcoin.co</Host>/issue/fulfill?pk=26208&amp;network=mainnet</Url>
        <UrlDivider />
        <Lion />
        <RewardsButton>
          <Bat />
          <RewardsBadge>
            <svg width="24" height="24" viewBox="0 0 24 24">
              <circle cx="12" cy="12" r="12" fill="#4c54d2" />
              <path d="M8 12.500L11 16L16 7" stroke="#fff" strokeWidth="2" fill="none" />
            </svg>
          </RewardsBadge>
        </RewardsButton>
      </AddressBar>
      <ExtensionRow>
        <Extension><Fox /></Extension>
        <Extension $c="#2f7a1c" $font="800 21px Inter, sans-serif">bw</Extension>
        <Extension><Diamond /><CountBadge>26</CountBadge></Extension>
        <Extension>
          <svg width="30" height="30" viewBox="0 0 30 30">
            <circle cx="15" cy="15" r="14.500" fill="#fff" />
            <circle cx="15" cy="15" r="12.500" fill="#2b70d9" />
            <text x="15" y="22" textAnchor="middle" fill="#fff" fontFamily="Inter" fontWeight="700" fontSize="21">a</text>
          </svg>
        </Extension>
        <Extension $bg="#575d60" $font="900 21px Inter, sans-serif">M</Extension>
        <Extension $bg="#e8405a" $r="50%">
          <Stroke w={20} h={20} sw={3.4} c="#fff"><path d="M4 2Q9 4 10 10T16 18M16 2Q11 4 10 10T4 18" /></Stroke>
        </Extension>
        <Extension $bg="#fff" $c="#8d8d8d" $r="50%" $font="italic 900 27px Inter, sans-serif">S</Extension>
        <Extension $bg="#bcbcbc" $r="6px" $font="italic 700 27px 'Liberation Serif', serif">h</Extension>
        <Extension $c="#7d35d6" $font="900 27px Inter, sans-serif"><RLetter>R</RLetter></Extension>
        <Extension><Gear /></Extension>
        <Extension $c="#0b0b0d" $font="italic 400 32px 'Liberation Serif', serif">f?</Extension>
        <Extension><Ticker /></Extension>
        <Extension><RedBook /></Extension>
        <Extension $c="#efeff1"><MdExtension size={33} /></Extension>
        <Extension>
          <Stroke w={20} h={26} c="#f4f4f6"><path d="M2 2H18M2 13H18M2 24H18" /></Stroke>
        </Extension>
      </ExtensionRow>
    </Toolbar>
  );
}

function Bookmarks() {
  return (
    <BookmarkBar>
      <MdPublic size={32} />
      <Camels><Camel /><Camel /><Camel /></Camels>
      {bookmarks.map(([name, w]) => (
        <Bookmark key={name} $w={w}><FolderIcon />{name}</Bookmark>
      ))}
    </BookmarkBar>
  );
}

function BountyForm() {
  return (
    <Card>
      <BackLink>
        <Stroke w={14} h={22} sw={3.6}><path d="M11.500 2L2.500 11L11.500 20" /></Stroke>
        Back to Bounty
      </BackLink>
      <Label>Issue URL</Label>
      <StaticRow>https://github.com/nervosnetwork/grants/issues/2<CheckCircle /></StaticRow>
      <Label>Github Username</Label>
      <StaticText>flippinroo2</StaticText>
      <Label>Project Link</Label>
      <Input>
        <InputText>https://github.com/flippinroo2/nervos_hackathon/tree/development/1%20-%20Create</InputText>
        <CheckCircle />
      </Input>
      <Label>Select the submitting project</Label>
      <Input $select>
        <InputText>9090 - Create A Godwoken Account On The EVM Layer 2 Testnet</InputText>
        <Caret />
      </Input>
      <Label>Video demo Link</Label>
      <Input $placeholder $ls="-0.4px"><InputText>https://youtu.be/DJartWzDn0E</InputText></Input>
      <Label>Payout Address <FaInfoCircle size={22} /></Label>
      <Input $filled $ls="0.550px"><InputText>0x4Fc8f0ad1901a1f147adD6f90E278e8BEe719B33</InputText></Input>
      <Label>Hours Worked</Label>
      <Input><InputText>3</InputText><CheckCircle /></Input>
      <RateRow>
        <RateText>Rate this funder</RateText>
        <Stars>{[1, 2, 3, 4, 5].map((n) => <FaStar key={n} size={65} viewBox="0 0 576 512" />)}</Stars>
      </RateRow>
      <Agreement $ls="-0.440px"><Tick />I have read, understand, and agree to, the <Terms>Terms of Service</Terms>.</Agreement>
      <Agreement $ls="-0.280px">
        <Tick />I understand that this information is being submitted to a public, immutable, blockchain. No one,<br />
        <LastLine>including Gitcoin Core, will be able to take my funds or change this information.</LastLine>
      </Agreement>
      <Submit>Submit Work</Submit>
    </Card>
  );
}

function AppDock() {
  return (
    <DockColumn>
      <Dock>
        {dockApps.map(([Icon, running], i) => <DockItem key={i} $running={running}><Icon /></DockItem>)}
        <DockRule />
        {dockUtilities.map((Icon, i) => <DockItem key={i}><Icon /></DockItem>)}
        <DockRule />
        <DockItem><WindowStack /></DockItem>
        <DockItem><Trash /></DockItem>
      </Dock>
    </DockColumn>
  );
}

export default function App() {
  return (
    <Desktop>
      <GlobalStyle />
      <SystemMenu />
      <Workspace>
        <Window>
          <Tabs />
          <BrowserToolbar />
          <Bookmarks />
          <Viewport>
            <BountyForm />
            <ScrollThumb />
          </Viewport>
        </Window>
        <AppDock />
      </Workspace>
    </Desktop>
  );
}
